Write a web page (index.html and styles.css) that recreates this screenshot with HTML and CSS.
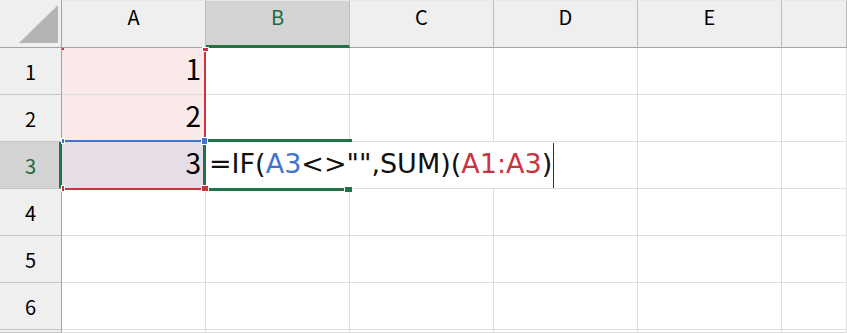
FILE: index.html
```html
<!DOCTYPE html>
<html lang="ja">
<head>
<meta charset="utf-8">
<title>Sheet</title>
<link rel="stylesheet" href="styles.css">
</head>
<body>
<div class="sheet">
  <div class="corner"><svg class="corner-tri" width="61" height="47" viewBox="0 0 61 47"><polygon points="19,43 58,43 58,5" fill="#b4b4b4"/></svg></div>
  <div class="colhead">A</div>
  <div class="colhead sel">B</div>
  <div class="colhead">C</div>
  <div class="colhead">D</div>
  <div class="colhead">E</div>
  <div class="colhead"></div>

  <div class="rowhead">1</div>
  <div class="cell num ref">1</div><div class="cell"></div><div class="cell"></div><div class="cell"></div><div class="cell"></div><div class="cell"></div>

  <div class="rowhead">2</div>
  <div class="cell num ref">2</div><div class="cell"></div><div class="cell"></div><div class="cell"></div><div class="cell"></div><div class="cell"></div>

  <div class="rowhead sel">3</div>
  <div class="cell num ref ref-cur">3</div>
  <div class="cell active">
    <div class="editor">=IF(<span class="t-blue">A3</span>&lt;&gt;"",SUM)(<span class="t-red">A1:A3</span>)</div>
  </div>
  <div class="cell"></div><div class="cell"></div><div class="cell"></div><div class="cell"></div>

  <div class="rowhead">4</div>
  <div class="cell"></div><div class="cell"></div><div class="cell"></div><div class="cell"></div><div class="cell"></div><div class="cell"></div>

  <div class="rowhead">5</div>
  <div class="cell"></div><div class="cell"></div><div class="cell"></div><div class="cell"></div><div class="cell"></div><div class="cell"></div>

  <div class="rowhead">6</div>
  <div class="cell"></div><div class="cell"></div><div class="cell"></div><div class="cell"></div><div class="cell"></div><div class="cell"></div>

  <div class="rowhead"></div>
  <div class="cell"></div><div class="cell"></div><div class="cell"></div><div class="cell"></div><div class="cell"></div><div class="cell"></div>

  <div class="red-line red-right"></div>
  <div class="red-line red-bottom"></div>
  <div class="blue-top"></div>
  <div class="selection"></div>
  <div class="handle h-red h-tl"></div>
  <div class="handle h-red h-tr"></div>
  <div class="handle h-red h-bl"></div>
  <div class="handle h-red h-br"></div>
  <div class="handle h-blue h-btl"></div>
  <div class="handle h-blue h-btr"></div>
  <div class="handle h-green h-fill"></div>
  <div class="caret"></div>
</div>
</body>
</html>
```
FILE: styles.css
```css
html, body {
  margin: 0;
  padding: 0;
  background: #ffffff;
  overflow: hidden;
}
.sheet {
  position: relative;
  display: grid;
  grid-template-columns: 62px repeat(5, 144px) 1fr;
  grid-template-rows: 48px repeat(6, 47px) 1fr;
  width: 847px;
  height: 333px;
  overflow: hidden;
  font-family: "Noto Sans CJK JP", "Noto Sans", sans-serif;
  color: #000;
}
.corner {
  box-sizing: border-box;
  background: #efefef;
  border-right: 1px solid #a3a3a3;
  border-bottom: 1px solid #a3a3a3;
}
.corner-tri {
  display: block;
}
.colhead {
  box-sizing: border-box;
  background: #efefef;
  border-right: 1px solid #bdbdbd;
  border-bottom: 1px solid #a3a3a3;
  border-top: 1px solid #e4e9ee;
  text-align: center;
  font-size: 20px;
  line-height: 32px;
  overflow: hidden;
}
.colhead.sel {
  background: #d3d3d3;
  color: #1e6b3c;
  border-bottom: 3px solid #217346;
}
.rowhead {
  box-sizing: border-box;
  background: #efefef;
  border-right: 1px solid #a3a3a3;
  border-bottom: 1px solid #c6c6c6;
  text-align: center;
  font-size: 20px;
  line-height: 46px;
  padding-top: 1px;
  overflow: hidden;
}
.rowhead.sel {
  background: #d3d3d3;
  color: #1e6b3c;
  border-right: 3px solid #217346;
  padding-left: 2px;
}
.cell {
  box-sizing: border-box;
  border-right: 1px solid #dedede;
  border-bottom: 1px solid #dedede;
  overflow: visible;
  min-width: 0;
}
.cell.num {
  text-align: right;
  font-size: 28px;
  line-height: 40px;
  padding-right: 4px;
}
.cell.ref {
  background: #f9e9e9;
}
.cell.ref-cur {
  background: #e6dde7;
}
.cell.active {
  position: relative;
}
.editor {
  position: absolute;
  left: 0;
  top: 0;
  width: 352px;
  height: 46px;
  background: #ffffff;
  z-index: 1;
  box-sizing: border-box;
  padding-left: 3px;
  font-family: "DejaVu Sans", sans-serif;
  font-size: 27px;
  line-height: 43px;
  white-space: nowrap;
  color: #111;
}
.t-blue { color: #4274cf; }
.t-red { color: #c9353f; }

.red-line, .blue-top, .selection, .handle, .caret {
  position: absolute;
  z-index: 2;
}
.red-line { background: #c9353f; }
.red-right { left: 204px; top: 48px; width: 2px; height: 92px; }
.red-bottom { left: 62px; top: 188px; width: 142px; height: 2px; }
.blue-top { left: 62px; top: 140px; width: 142px; height: 2px; background: #4274cf; }
.selection {
  left: 203px;
  top: 139px;
  width: 149px;
  height: 52px;
  box-sizing: border-box;
  border-top: 3px solid #217346;
  border-left: 3px solid #217346;
  border-bottom: 3px solid #217346;
  z-index: 3;
}
.handle {
  z-index: 4;
  box-shadow: 0 0 0 1px #ffffff;
}
.h-red { background: #c9353f; }
.h-blue { background: #4274cf; }
.h-green { background: #217346; }
.h-tl { left: 62px; top: 48px; width: 2px; height: 2px; box-shadow: none; }
.h-tr { left: 203px; top: 48px; width: 5px; height: 3px; }
.h-bl { left: 62px; top: 186px; width: 2px; height: 5px; }
.h-br { left: 202px; top: 186px; width: 6px; height: 5px; }
.h-btl { left: 62px; top: 139px; width: 2px; height: 4px; }
.h-btr { left: 202px; top: 138px; width: 5px; height: 6px; }
.h-fill { left: 345px; top: 187px; width: 7px; height: 5px; }
.caret {
  left: 553px;
  top: 143px;
  width: 1px;
  height: 45px;
  background: #333333;
  z-index: 5;
}
```
